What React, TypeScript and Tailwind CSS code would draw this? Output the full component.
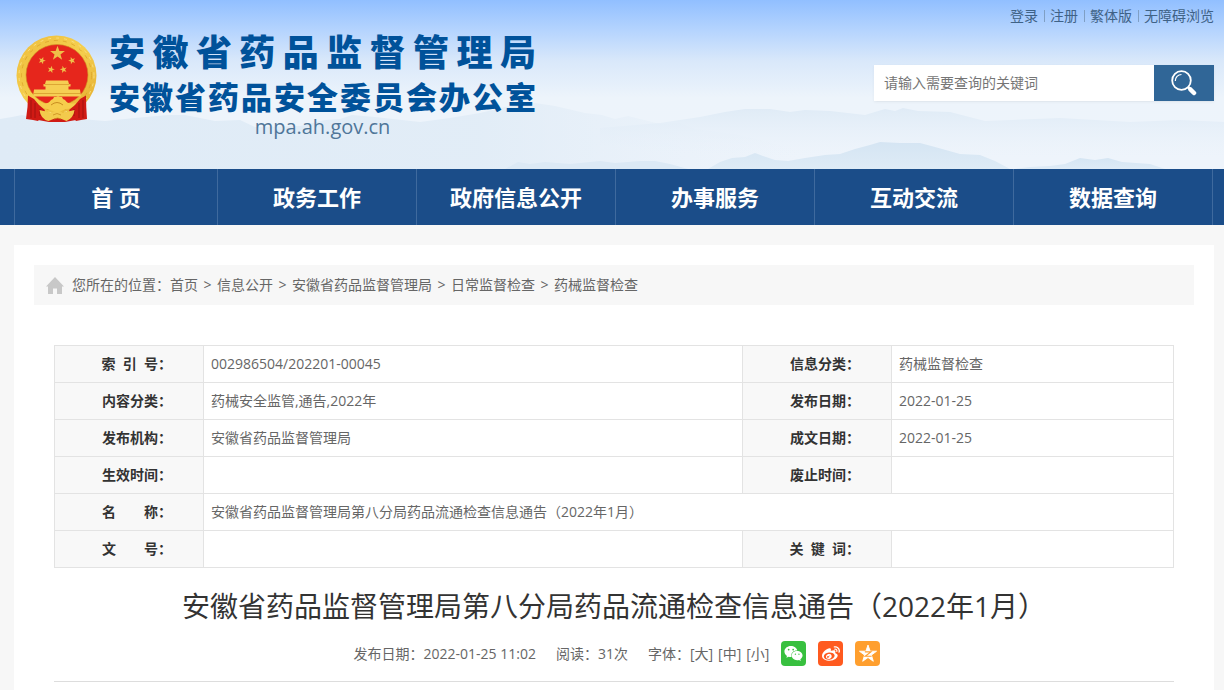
import { Fragment } from 'react';
import { FaWeixin, FaWeibo } from 'react-icons/fa';

const userLinks = ['登录', '注册', '繁体版', '无障碍浏览'];
const navItems = ['首 页', '政务工作', '政府信息公开', '办事服务', '互动交流', '数据查询'];
const crumbs = ['首页', '信息公开', '安徽省药品监督管理局', '日常监督检查', '药械监督检查'];

interface Field {
  label: string;
  value: string;
}

const rows: Field[][] = [
  [
    { label: '索  引  号：', value: '002986504/202201-00045' },
    { label: '信息分类：', value: '药械监督检查' },
  ],
  [
    { label: '内容分类：', value: '药械安全监管,通告,2022年' },
    { label: '发布日期：', value: '2022-01-25' },
  ],
  [
    { label: '发布机构：', value: '安徽省药品监督管理局' },
    { label: '成文日期：', value: '2022-01-25' },
  ],
  [
    { label: '生效时间：', value: '' },
    { label: '废止时间：', value: '' },
  ],
  [{ label: '名　　称：', value: '安徽省药品监督管理局第八分局药品流通检查信息通告（2022年1月）' }],
  [
    { label: '文　　号：', value: '' },
    { label: '关  键  词：', value: '' },
  ],
];

const STAR = 'M0-10 2.4-3.1 9.5-3.1 3.8 1.2 5.9 8.1 0 3.9-5.9 8.1-3.8 1.2-9.5-3.1-2.4-3.1Z';

function Emblem() {
  return (
    <svg viewBox="0 0 82 88" className="w-[82px] h-[88px] shrink-0" aria-hidden="true">
      <defs>
        <linearGradient id="gold" x1="0" y1="0" x2="1" y2="1">
          <stop offset="0" stopColor="#eebd3c" />
          <stop offset="0.5" stopColor="#f5cf4e" />
          <stop offset="1" stopColor="#e3ab2d" />
        </linearGradient>
      </defs>
      <path d="M20 74h42l-2 11-11 2H33l-11-2z" fill="#d01a14" />
      <circle cx="40.5" cy="40.5" r="40" fill="url(#gold)" />
      <circle cx="40.5" cy="40.5" r="35" fill="none" stroke="#dca52b" strokeWidth="0.8" strokeDasharray="4 5" />
      <circle cx="40.5" cy="40.5" r="37.5" fill="none" stroke="#fbe083" strokeWidth="0.9" strokeDasharray="3 5" />
      <ellipse cx="41" cy="40" rx="31" ry="30.5" fill="#e6261c" stroke="#cf9322" strokeWidth="0.6" />
      <g fill="#eec049">
        <path d={STAR} transform="translate(41.5 18.5) scale(0.78)" />
        <path d={STAR} transform="translate(26 25.5) rotate(20) scale(0.38)" />
        <path d={STAR} transform="translate(56 25.5) rotate(-20) scale(0.38)" />
        <path d={STAR} transform="translate(35 34.5) rotate(15) scale(0.38)" />
        <path d={STAR} transform="translate(47.5 34.5) rotate(-15) scale(0.38)" />
      </g>
      <g fill="#f6ce53">
        <path d="M30 45.5h22l1 3.5h1.5v2.5H52.5V55h-23v-3.5H27.5V49H29z" />
        <path d="M18 54.5h46l1 7H17z" />
      </g>
      <path d="M28.5 49.5h25M18 58.5h46" stroke="#d39527" strokeWidth="0.7" />
      <path d="M12 60.5 18 64l5 6 6 5-2 5-5 6-5-1-7-1q2-12 2-23.5z" fill="#d01a14" />
      <path d="M70 60.5 64 64l-5 6-6 5 2 5 5 6 5-1 6-1q-1-12-1-23.5z" fill="#d01a14" />
      <path d="M15 65v18M19 68v15M24 74v7M67 65v18M63 68v15M58 74v7" stroke="#9d120e" strokeWidth="0.9" />
      <path d="M24 68q8 2 11-3l2-1 1-2h2l2-1 2 1h2l1 2 2 1q3 5 11 3-4 6-10 6l-9 4-9-4q-6 0-8-6z" fill="#f6cd4c" />
      <path d="M35 70q6-5 12 0" fill="none" stroke="#c98d20" strokeWidth="1" />
      <path d="M41.5 78q-3-3-6 0l-12-3q1 9 9 11l5-2q4-2 8 0l5 2q7-3 8-11l-12 3q-2-3-5 0z" fill="#f3ca4c" />
      <path d="M37 80q4-3 8 0M38 84q4-2 7 0" fill="none" stroke="#c98d20" strokeWidth="0.8" />
    </svg>
  );
}

function Mountains() {
  return (
    <svg viewBox="0 0 1224 169" preserveAspectRatio="none" className="absolute inset-0 w-full h-full" aria-hidden="true">
      <defs>
        <linearGradient id="haze" x1="0" y1="0" x2="1" y2="0">
          <stop offset="0" stopColor="#dfebf6" />
          <stop offset="0.6" stopColor="#dfebf6" stopOpacity="0.8" />
          <stop offset="1" stopColor="#e5eef8" stopOpacity="0" />
        </linearGradient>
        <linearGradient id="farHaze" x1="0" y1="0" x2="0" y2="1">
          <stop offset="0" stopColor="#dfebf6" />
          <stop offset="0.8" stopColor="#e9f1fa" stopOpacity="0" />
        </linearGradient>
        <linearGradient id="hill" x1="0" y1="0" x2="0" y2="1">
          <stop offset="0" stopColor="#d5e5f3" />
          <stop offset="1" stopColor="#deebf6" />
        </linearGradient>
      </defs>
      <path d="M0 119 12 117 22 115 40 119 80 119 105 121 135 118 168 115 185 115 215 121 240 120 255 127 300 126 325 120 340 119 352 115 375 117 420 122 450 118 480 113 505 107 535 103 555 106 585 113 602 115 615 119 628 116 640 119 660 124 680 123 695 129 740 135 800 150V169H0Z" fill="url(#haze)" />
      <path d="M600 128 660 123 700 117 725 112 745 109 770 109 790 112 805 110 830 111 865 115 885 109 895 111 903 108 918 111 950 112 985 121 1060 118 1130 122 1180 120 1224 122V169H600Z" fill="url(#farHaze)" />
      <path d="M505 169 518 162 530 164 545 162 570 164 600 161 615 163 640 161 655 161 670 164 688 169Z" fill="#dce9f5" />
      <path d="M708 169 720 162 732 158 745 157 755 153 763 156 775 160 788 161 805 158 825 155 840 154 855 149 870 145 880 142 900 143 920 143 935 147 960 154 980 155 995 161 1010 169Z" fill="url(#hill)" />
      <path d="M1015 169 1030 167 1050 166 1065 164 1080 158 1095 160 1108 158 1122 162 1150 164 1165 169Z" fill="url(#hill)" />
    </svg>
  );
}

function SearchIcon() {
  return (
    <svg viewBox="0 0 26 26" className="w-[26px] h-[26px]" fill="none" stroke="#fff" aria-hidden="true">
      <circle cx="10.5" cy="10.5" r="9.3" strokeWidth="1.8" />
      <path d="M4.3 11a6.3 6.3 0 0 1 6.2-6.5" strokeWidth="1.2" />
      <path d="m17 17 2 2" strokeWidth="2.5" />
      <path d="m19.5 19.5 3.5 3.5" strokeWidth="4.5" strokeLinecap="round" />
    </svg>
  );
}

function HomeIcon() {
  return (
    <svg viewBox="0 0 18 17" className="w-[18px] h-[17px]" fill="#c8c8c8" aria-hidden="true">
      <path d="M9 0 18 9.5H16V17H11V11.5H7V17H2V9.5H0Z" />
    </svg>
  );
}

function QzoneIcon() {
  return (
    <svg viewBox="-10 -10 20 20" className="w-[18px] h-[18px]" aria-hidden="true">
      <path d={STAR} fill="#fff" stroke="#fff" strokeLinejoin="round" />
      <path d="M-3.5-2.3H3.2L-3 2.5H4" fill="none" stroke="#ff9f2e" strokeWidth="1.3" />
    </svg>
  );
}

function Header() {
  return (
    <header className="relative bg-[linear-gradient(#91bfff,#b5d4fe_18%,#d9e8fa_36%,#edf4fb_58%,#eef4fb)]">
      <Mountains />
      <div className="relative pl-3.5 pr-2.5 h-[169px] flex justify-between">
        <div className="flex gap-[11px] pt-[35px] pl-0.5">
          <Emblem />
          <h1 className="w-[427px] -mt-1 font-black text-[#00529a]">
            <span className="block text-[36px] leading-[44px] [text-align-last:justify]">安徽省药品监督管理局</span>
            <span className="block text-[31px] leading-[44px] [text-align-last:justify]">安徽省药品安全委员会办公室</span>
            <span className="block text-center text-xl leading-4 font-normal text-[#4f7699]">mpa.ah.gov.cn</span>
          </h1>
        </div>
        <div className="flex flex-col items-end pt-1.5">
          <div className="flex items-center text-sm text-[#3f6286]">
            {userLinks.map((link, i) => (
              <Fragment key={link}>
                {i > 0 && <span className="w-px h-3 ml-1.5 mr-[5px] bg-[#7f9fc4]" />}
                <a href="#">{link}</a>
              </Fragment>
            ))}
          </div>
          <form className="flex mt-[39px] shadow-sm shadow-black/5" onSubmit={e => e.preventDefault()}>
            <input
              type="text"
              aria-label="请输入需要查询的关键词"
              placeholder="请输入需要查询的关键词"
              className="w-[280px] h-9 px-2.5 pb-0.5 bg-white text-sm placeholder:text-[#757575] focus:outline-none"
            />
            <button type="submit" aria-label="搜索" className="w-[60px] h-9 flex items-center justify-center bg-[#306697]">
              <SearchIcon />
            </button>
          </form>
        </div>
      </div>
    </header>
  );
}

export default function App() {
  return (
    <div className="min-h-screen bg-[#f7f7f7] text-sm text-[#666] font-['Open_Sans','Noto_Sans_CJK_SC',sans-serif]">
      <Header />

      <nav className="bg-[#1b4d89] pl-3.5 pr-[11px]">
        <div className="flex border-l border-[#3f6a9e]">
          {navItems.map(item => (
            <a
              key={item}
              href="#"
              className="flex-1 first:grow-[1.02] h-14 border-r border-[#3f6a9e] text-center text-[22px] leading-14 font-bold text-white"
            >
              {item}
            </a>
          ))}
        </div>
      </nav>

      <main className="mt-5 ml-3.5 mr-2.5 p-5 bg-white">
        <div className="h-10 flex items-center pl-3 bg-[#f7f7f7]">
          <HomeIcon />
          <span className="ml-2">您所在的位置：</span>
          {crumbs.map((crumb, i) => (
            <Fragment key={crumb}>
              {i > 0 && <span className="w-[19px] text-center">&gt;</span>}
              <a href="#">{crumb}</a>
            </Fragment>
          ))}
        </div>

        <article className="mt-10 mx-5">
          <table className="w-full table-fixed border-collapse">
            <colgroup>
              <col className="w-[149px]" />
              <col />
              <col className="w-[149px]" />
              <col className="w-[282px]" />
            </colgroup>
            <tbody>
              {rows.map(row => (
                <tr key={row[0].label} className="h-[37px]">
                  {row.map(({ label, value }) => (
                    <Fragment key={label}>
                      <th className="border border-[#e3e3e3] bg-[#f8f8f8] pr-[31px] text-right font-bold whitespace-pre text-[#333]">
                        {label}
                      </th>
                      <td colSpan={row.length === 1 ? 3 : 1} className="border border-[#e3e3e3] px-[7px]">
                        {value}
                      </td>
                    </Fragment>
                  ))}
                </tr>
              ))}
            </tbody>
          </table>

          <h2 className="mt-4 text-center text-[28px] leading-11 text-[#333]">
            安徽省药品监督管理局第八分局药品流通检查信息通告（2022年1月）
          </h2>

          <div className="mt-[13px] pb-[15px] pl-1.5 flex items-center justify-center border-b border-[#ddd]">
            <span>发布日期：2022-01-25 11:02</span>
            <span className="ml-5">阅读：31次</span>
            <span className="ml-5">字体：</span>
            <div className="flex gap-[5px]">
              <button type="button">[大]</button>
              <button type="button">[中]</button>
              <button type="button">[小]</button>
            </div>
            <div className="ml-3 flex gap-3 text-white">
              <a href="#" aria-label="微信" className="size-[25px] flex items-center justify-center rounded-sm bg-[#38c03f]">
                <FaWeixin size={19} />
              </a>
              <a href="#" aria-label="微博" className="size-[25px] flex items-center justify-center rounded-sm bg-[#ff5a1f]">
                <FaWeibo size={18} />
              </a>
              <a href="#" aria-label="QQ空间" className="size-[25px] flex items-center justify-center rounded-sm bg-[#ff9f2e]">
                <QzoneIcon />
              </a>
            </div>
          </div>
        </article>
      </main>
    </div>
  );
}
